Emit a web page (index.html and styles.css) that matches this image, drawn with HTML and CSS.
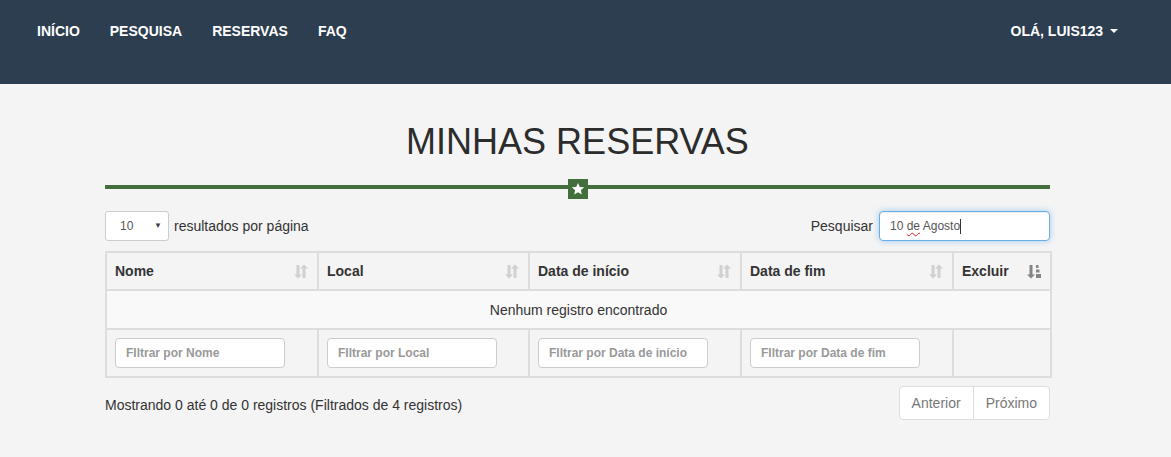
FILE: index.html
```html
<!DOCTYPE html>
<html lang="pt-BR">
<head>
<meta charset="utf-8">
<title>Minhas Reservas</title>
<link rel="stylesheet" href="styles.css">
</head>
<body>
<header class="navbar">
  <nav class="nav-left">
    <a class="nav-link" href="#">INÍCIO</a>
    <a class="nav-link" href="#">PESQUISA</a>
    <a class="nav-link" href="#">RESERVAS</a>
    <a class="nav-link" href="#">FAQ</a>
  </nav>
  <div class="nav-right">
    <a class="nav-link" href="#">OLÁ, LUIS123 <span class="caret"></span></a>
  </div>
</header>

<div class="page">
  <main class="container">
    <h1 class="title">MINHAS RESERVAS</h1>
    <div class="divider">
      <span class="divider-line"></span>
      <span class="divider-star">
        <svg width="14" height="14" viewBox="0 0 24 24"><path d="M12 1.5l3.1 6.9 7.4.7-5.6 5 1.7 7.4L12 17.6l-6.6 3.9 1.7-7.4-5.6-5 7.4-.7z" fill="#fff"/></svg>
      </span>
      <span class="divider-line"></span>
    </div>

    <div class="controls">
      <div class="length">
        <div class="select"><span>10</span><span class="select-arrow">▼</span></div>
        <span>resultados por página</span>
      </div>
      <div class="search">
        <span>Pesquisar</span>
        <div class="search-input">10 <span class="misspelled">de</span> Agosto<span class="cursor"></span></div>
      </div>
    </div>

    <table class="table">
      <colgroup>
        <col class="c1"><col class="c2"><col class="c3"><col class="c4"><col class="c5">
      </colgroup>
      <thead>
        <tr class="head-row">
          <th><div class="th-inner"><span>Nome</span><svg class="sort" width="14" height="15" viewBox="0 0 14 15"><path d="M2.5 1v9.5H0L4 14.5 8 10.5H5.5V1z" fill="#d0d0d0"/><path d="M11.5 14V4.5H14L10 0.5 6 4.5h2.5V14z" fill="#d0d0d0"/></svg></div></th>
          <th><div class="th-inner"><span>Local</span><svg class="sort" width="14" height="15" viewBox="0 0 14 15"><path d="M2.5 1v9.5H0L4 14.5 8 10.5H5.5V1z" fill="#d0d0d0"/><path d="M11.5 14V4.5H14L10 0.5 6 4.5h2.5V14z" fill="#d0d0d0"/></svg></div></th>
          <th><div class="th-inner"><span>Data de início</span><svg class="sort" width="14" height="15" viewBox="0 0 14 15"><path d="M2.5 1v9.5H0L4 14.5 8 10.5H5.5V1z" fill="#d0d0d0"/><path d="M11.5 14V4.5H14L10 0.5 6 4.5h2.5V14z" fill="#d0d0d0"/></svg></div></th>
          <th><div class="th-inner"><span>Data de fim</span><svg class="sort" width="14" height="15" viewBox="0 0 14 15"><path d="M2.5 1v9.5H0L4 14.5 8 10.5H5.5V1z" fill="#d0d0d0"/><path d="M11.5 14V4.5H14L10 0.5 6 4.5h2.5V14z" fill="#d0d0d0"/></svg></div></th>
          <th><div class="th-inner"><span>Excluir</span><svg class="sort" width="14" height="15" viewBox="0 0 14 15"><path d="M2.5 1v9.5H0L4 14.5 8 10.5H5.5V1z" fill="#858585"/><rect x="9" y="1" width="2.5" height="3" fill="#858585"/><rect x="9" y="5.5" width="3.5" height="3" fill="#858585"/><rect x="9" y="10" width="5" height="4" fill="#858585"/></svg></div></th>
        </tr>
      </thead>
      <tbody>
        <tr class="empty-row">
          <td colspan="5">Nenhum registro encontrado</td>
        </tr>
      </tbody>
      <tfoot>
        <tr class="filter-row">
          <td><input class="filter" type="text" placeholder="FIltrar por Nome"></td>
          <td><input class="filter" type="text" placeholder="FIltrar por Local"></td>
          <td><input class="filter" type="text" placeholder="FIltrar por Data de início"></td>
          <td><input class="filter" type="text" placeholder="FIltrar por Data de fim"></td>
          <td></td>
        </tr>
      </tfoot>
    </table>

    <div class="bottom">
      <div class="info">Mostrando 0 até 0 de 0 registros (Filtrados de 4 registros)</div>
      <div class="pagination">
        <a class="page-btn" href="#">Anterior</a>
        <a class="page-btn" href="#">Próximo</a>
      </div>
    </div>
  </main>
</div>
</body>
</html>
```

FILE: styles.css
```css
* { box-sizing: border-box; }

html, body {
  margin: 0;
  padding: 0;
}

body {
  background: #f4f4f4;
  font-family: "Liberation Sans", Arial, sans-serif;
  font-size: 14px;
  line-height: 20px;
  color: #333;
  height: 457px;
  overflow: hidden;
}

.navbar {
  background: #2c3e50;
  height: 84px;
  display: flex;
  justify-content: space-between;
  align-items: flex-start;
  padding: 0 38px 0 22px;
}

.nav-left, .nav-right {
  display: flex;
}

.nav-link {
  display: block;
  color: #fff;
  text-decoration: none;
  font-weight: bold;
  font-size: 14px;
  line-height: 20px;
  padding: 21px 15px 0;
}

.caret {
  display: inline-block;
  width: 0;
  height: 0;
  margin-left: 3px;
  vertical-align: middle;
  border-top: 4px solid #fff;
  border-left: 4px solid transparent;
  border-right: 4px solid transparent;
  position: relative;
  top: -1px;
}

.page {
  padding-right: 16px;
}

.container {
  width: 945px;
  margin: 0 auto;
  padding-top: 38px;
}

.title {
  margin: 0;
  text-align: center;
  font-family: "Liberation Sans", Arial, sans-serif;
  font-weight: normal;
  font-size: 36px;
  line-height: 40px;
  color: #2c2c2c;
}

.divider {
  display: flex;
  align-items: flex-start;
  margin-top: 17px;
  height: 20px;
}

.divider-line {
  flex: 1;
  height: 4px;
  margin-top: 6px;
  background: #426f3c;
}

.divider-star {
  width: 20px;
  height: 20px;
  background: #426f3c;
  display: flex;
  align-items: center;
  justify-content: center;
}

.controls {
  display: flex;
  justify-content: space-between;
  align-items: center;
  margin-top: 12px;
  height: 30px;
}

.length, .search {
  display: flex;
  align-items: center;
  gap: 5px;
}

.select {
  width: 64px;
  height: 30px;
  background: #fff;
  border: 1px solid #ccc;
  border-radius: 3px;
  display: flex;
  align-items: center;
  justify-content: space-between;
  padding: 0 6px 0 14px;
  font-size: 12px;
  color: #555;
}

.select-arrow {
  font-size: 8px;
  color: #444;
}

.search {
  gap: 6px;
}

.search-input {
  width: 171px;
  height: 30px;
  background: #fff;
  border: 1px solid #66afe9;
  border-radius: 4px;
  box-shadow: inset 0 1px 1px rgba(0,0,0,.075), 0 0 6px rgba(102,175,233,.6);
  padding: 0 10px;
  font-size: 12px;
  line-height: 28px;
  color: #555;
  display: flex;
  align-items: center;
  white-space: pre;
}

.misspelled {
  text-decoration: underline wavy #e02020;
  text-decoration-thickness: 1px;
  text-underline-offset: 2px;
}

.cursor {
  display: inline-block;
  width: 1px;
  height: 15px;
  background: #333;
}

.table {
  width: 945px;
  margin-top: 10px;
  border-collapse: collapse;
  table-layout: fixed;
  border: 2px solid #ddd;
}

.c1 { width: 212px; }
.c2 { width: 211px; }
.c3 { width: 212px; }
.c4 { width: 212px; }
.c5 { width: 98px; }

.table th, .table td {
  border: 2px solid #ddd;
  padding: 0 8px;
}

.head-row th {
  height: 38px;
  background: #f4f4f4;
  text-align: left;
  font-weight: bold;
}

.th-inner {
  display: flex;
  justify-content: space-between;
  align-items: center;
}

.sort {
  margin-right: 1px;
}

.empty-row td {
  height: 39px;
  background: #f9f9f9;
  text-align: center;
}

.filter-row td {
  height: 48px;
  background: #f4f4f4;
}

.filter {
  width: 170px;
  height: 30px;
  border: 1px solid #ccc;
  border-radius: 4px;
  background: #fff;
  padding: 0 10px;
  font-family: "Liberation Sans", Arial, sans-serif;
  font-size: 12px;
  font-weight: bold;
  color: #555;
  display: block;
}

.filter::placeholder {
  color: #999;
  font-weight: bold;
}

.bottom {
  display: flex;
  justify-content: space-between;
  align-items: center;
  margin-top: 8px;
}

.info {
  padding-top: 4px;
}

.pagination {
  display: flex;
}

.page-btn {
  display: block;
  height: 34px;
  line-height: 32px;
  padding: 0 12px;
  background: #fff;
  border: 1px solid #ddd;
  color: #777;
  text-decoration: none;
}

.page-btn:first-child {
  border-radius: 4px 0 0 4px;
}

.page-btn + .page-btn {
  margin-left: -1px;
  border-radius: 0 4px 4px 0;
}
```
